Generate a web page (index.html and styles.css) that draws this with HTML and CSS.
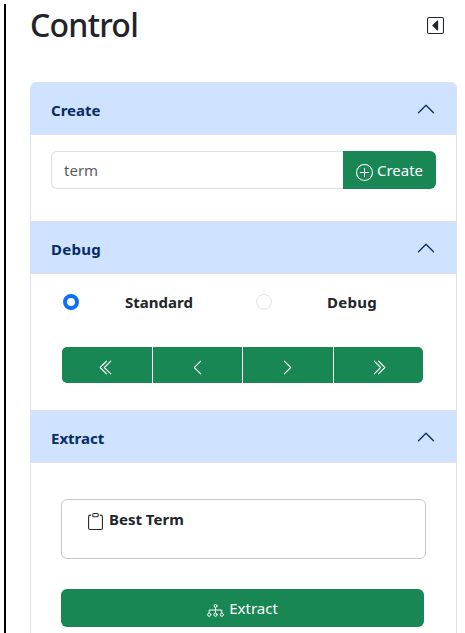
FILE: index.html
```html
<!DOCTYPE html>
<html lang="en">
<head>
<meta charset="utf-8">
<title>Control</title>
<link rel="stylesheet" href="styles.css">
</head>
<body>
<main class="panel">
  <header class="top">
    <h1>Control</h1>
    <svg class="collapse" viewBox="0 0 16 16" fill="currentColor"><path d="M14 1a1 1 0 0 1 1 1v12a1 1 0 0 1-1 1H2a1 1 0 0 1-1-1V2a1 1 0 0 1 1-1zM2 0a2 2 0 0 0-2 2v12a2 2 0 0 0 2 2h12a2 2 0 0 0 2-2V2a2 2 0 0 0-2-2z"/><path d="M10.2 12.800a.5.5 0 0 0 .3-.5V3.700a.5.5 0 0 0-.8-.4l-4.500 4.300a.5.5 0 0 0 0 .8l4.500 4.300a.5.5 0 0 0 .5.100z"/></svg>
  </header>
  <div class="accordion">
    <section class="create">
      <h2><span>Create</span><svg class="chev" viewBox="0 0 16 16"><path d="M2 11l6-6 6 6"/></svg></h2>
      <div class="input-group">
        <input type="text" placeholder="term">
        <button class="btn"><svg class="plus" viewBox="0 0 16 16"><circle cx="8" cy="8" r="7.500"/><path d="M8 4v8M4 8h8"/></svg><span>Create</span></button>
      </div>
    </section>
    <section class="debug">
      <h2><span class="wide">Debug</span><svg class="chev" viewBox="0 0 16 16"><path d="M2 11l6-6 6 6"/></svg></h2>
      <div class="modes">
        <label><input type="radio" name="mode" checked><span>Standard</span></label>
        <label><input type="radio" name="mode"><span class="wide">Debug</span></label>
      </div>
      <div class="steps">
        <button class="btn"><svg viewBox="0 0 16 16"><path d="M8 2L2 8l6 6M12 2L6 8l6 6"/></svg></button>
        <button class="btn"><svg viewBox="0 0 16 16"><path d="M11 2L5 8l6 6"/></svg></button>
        <button class="btn"><svg viewBox="0 0 16 16"><path d="M5 2l6 6-6 6"/></svg></button>
        <button class="btn"><svg viewBox="0 0 16 16"><path d="M4 2l6 6-6 6M8 2l6 6-6 6"/></svg></button>
      </div>
    </section>
    <section class="extract">
      <h2><span>Extract</span><svg class="chev" viewBox="0 0 16 16"><path d="M2 11l6-6 6 6"/></svg></h2>
      <div class="result"><svg class="clip" viewBox="0 0 16 16" fill="currentColor"><path d="M4 1.500H3a2 2 0 0 0-2 2V14a2 2 0 0 0 2 2h10a2 2 0 0 0 2-2V3.500a2 2 0 0 0-2-2h-1v1h1a1 1 0 0 1 1 1V14a1 1 0 0 1-1 1H3a1 1 0 0 1-1-1V3.500a1 1 0 0 1 1-1h1z"/><path d="M9.500 1a.5.5 0 0 1 .5.5v1a.5.5 0 0 1-.5.5h-3a.5.5 0 0 1-.5-.5v-1a.5.5 0 0 1 .5-.5zm-3-1A1.500 1.500 0 0 0 5 1.500v1A1.500 1.500 0 0 0 6.500 4h3A1.500 1.500 0 0 0 11 2.500v-1A1.500 1.500 0 0 0 9.500 0z"/></svg><span>Best Term</span></div>
      <button class="btn run"><svg class="tree" viewBox="0 0 17 13"><circle cx="8.500" cy="2" r="1.500"/><path d="M8.500 3.500v5M2.200 8.500v-2.500h12.600v2.500"/><circle cx="2.200" cy="10.700" r="1.600"/><circle cx="8.500" cy="10.700" r="1.600"/><circle cx="14.800" cy="10.700" r="1.600"/></svg><span>Extract</span></button>
    </section>
  </div>
</main>
</body>
</html>
```
FILE: styles.css
```css
* { box-sizing: border-box; }
body {
  margin: 0;
  padding-top: 4px;
  height: 633px;
  overflow: hidden;
  background: #fff;
  color: #212529;
  font: 16px/24px "Noto Sans", "Open Sans", sans-serif;
}
.panel {
  margin-left: 4px;
  height: 629px;
  border-left: 2px solid #000;
  padding: 0 8px 0 24px;
}
.top { display: flex; justify-content: space-between; height: 78px; }
h1 { margin: 2px 0 0; font-size: 32px; line-height: 38px; font-weight: 500; letter-spacing: -.75px; }
.collapse { width: 17px; height: 17px; margin: 13px 13px 0 0; }
.accordion {
  width: 427px;
  height: 551px;
  border: 1px solid #dee2e6;
  border-bottom: 0;
  border-radius: 6px 6px 0 0;
  overflow: hidden;
}
section + section { border-top: 1px solid #dee2e6; }
.create { height: 138px; }
.debug { height: 189px; }
h2 {
  display: flex;
  align-items: center;
  justify-content: space-between;
  height: 52px;
  margin: 0;
  padding: 3px 20px 0;
  background: #cfe2ff;
  border-bottom: 1px solid #dee2e6;
  color: #052c65;
  font-size: 15px;
  font-weight: 700;
}
svg { flex: none; }
.chev { width: 20px; height: 20px; margin-top: -3px; }
.chev, .plus, .steps svg, .tree { fill: none; stroke: currentColor; stroke-linecap: round; stroke-linejoin: round; }
.input-group { display: flex; width: 385px; height: 38px; margin: 16px 0 0 20px; }
.input-group input {
  flex: 1;
  min-width: 0;
  padding: 0 12px;
  border: 1px solid #dee2e6;
  border-right: 0;
  border-radius: 6px 0 0 6px;
  font: inherit;
  font-size: 15px;
}
input::placeholder { color: #595c5f; opacity: 1; }
.btn {
  display: flex;
  align-items: center;
  justify-content: center;
  padding: 0;
  border: 0;
  background: #198754;
  color: #fff;
  font: inherit;
  font-size: 15px;
}
.input-group .btn { width: 93px; gap: 4px; border-radius: 0 6px 6px 0; }
.plus { width: 17px; height: 17px; margin-top: 4px; }
.wide { letter-spacing: .3px; }
.modes { display: flex; height: 24px; margin: 16px 0 0 32px; }
.modes label { display: flex; align-items: center; width: 193px; font-size: 15px; font-weight: 700; }
.modes input {
  appearance: none;
  width: 16px;
  height: 16px;
  margin: 0 46px 0 0;
  border: 1px solid #dee2e6;
  border-radius: 50%;
}
.modes input:checked { border: 4px solid #0d6efd; }
.modes label + label input { margin-right: 55px; }
.steps {
  display: grid;
  grid-template-columns: 90px 89px 90px 89px;
  gap: 1px;
  width: 361px;
  height: 36px;
  margin: 33px 0 0 31px;
  border-radius: 5px;
  overflow: hidden;
}
.steps svg { width: 17px; height: 17px; margin: 5px 1px 0 0; }
.result {
  display: flex;
  gap: 5px;
  width: 365px;
  height: 60px;
  margin: 36px 0 0 30px;
  padding: 7px 25px;
  border: 1px solid #c8c9ca;
  border-radius: 6px;
  font-size: 15px;
  font-weight: 700;
}
.clip { width: 17px; height: 17px; margin-top: 6px; }
.run { width: 363px; height: 38px; margin: 30px 0 0 30px; border-radius: 6px; gap: 5px; }
.tree { width: 17px; height: 13px; margin-top: 5px; }
```
